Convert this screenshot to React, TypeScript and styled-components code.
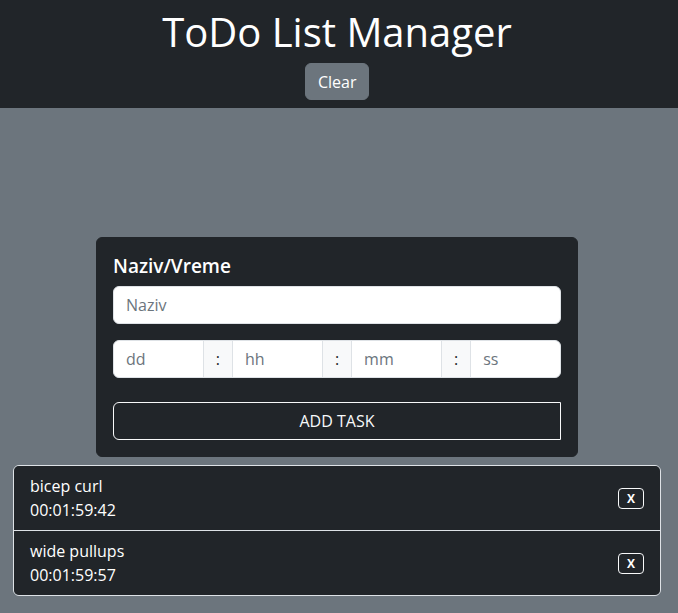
import React from 'react'
import styled, { createGlobalStyle } from 'styled-components'

const GlobalStyle = createGlobalStyle`
  * { box-sizing: border-box; }
  html, body {
    margin: 0;
    padding: 0;
    background: #6c757d;
    font-family: "Open Sans", "Noto Sans", sans-serif;
    color: #fff;
  }
`

const tasks = [
  { name: 'bicep curl', time: '00:01:59:42' },
  { name: 'wide pullups', time: '00:01:59:57' },
]

const Header = styled.header`
  background: #212529;
  padding: 6px 4px 8px 0;
  height: 108px;
  display: flex;
  flex-direction: column;
  align-items: center;
`

const Title = styled.h1`
  margin: 0 0 5px;
  font-size: 40px;
  font-weight: 500;
  line-height: 52px;
`

const ClearBtn = styled.button`
  background: #6c757d;
  color: #fff;
  border: 1px solid #6c757d;
  border-radius: 6px;
  font: inherit;
  font-size: 16px;
  line-height: 24px;
  padding: 6px 12px;
  width: 64px;
  height: 37px;
`

const Main = styled.main`
  padding: 129px 17px 0 13px;
  display: flex;
  flex-direction: column;
  align-items: center;
  gap: 8px;
`

const Card = styled.section`
  width: 482px;
  background: #212529;
  border: 1px solid #212529;
  border-radius: 6px;
  padding: 16px;
  display: flex;
  flex-direction: column;
`

const CardTitle = styled.h5`
  margin: 0 0 8px;
  font-size: 19px;
  font-weight: 600;
  line-height: 24px;
`

const Input = styled.input`
  display: block;
  width: 100%;
  min-width: 0;
  font: inherit;
  font-size: 16px;
  line-height: 24px;
  padding: 6px 12px;
  color: #212529;
  background: #fff;
  border: 1px solid #dee2e6;
  border-radius: 6px;
  &::placeholder { color: #6c757d; }
`

const TimeGroup = styled.div`
  display: flex;
  margin-top: 16px;
  ${Input} {
    flex: 1;
    border-radius: 0;
  }
  ${Input}:first-child { border-radius: 6px 0 0 6px; }
  ${Input}:last-child { border-radius: 0 6px 6px 0; }
`

const Addon = styled.span`
  display: flex;
  align-items: center;
  padding: 6px 12px;
  font-size: 16px;
  line-height: 24px;
  color: #212529;
  background: #f8f9fa;
  border: 1px solid #dee2e6;
  margin: 0 -1px;
  position: relative;
`

const AddBtn = styled.button`
  margin-top: 24px;
  width: 100%;
  background: transparent;
  color: #f8f9fa;
  border: 1px solid #f8f9fa;
  border-radius: 6px 0 0 6px;
  font: inherit;
  font-size: 16px;
  line-height: 24px;
  padding: 6px 12px;
`

const List = styled.ul`
  list-style: none;
  margin: 0;
  padding: 0;
  width: 648px;
  border: 1px solid #dee2e6;
  border-radius: 6px;
  overflow: hidden;
`

const Item = styled.li`
  background: #212529;
  padding: 8px 16px;
  display: flex;
  align-items: center;
  justify-content: space-between;
  font-size: 16px;
  line-height: 24px;
  & + & { border-top: 1px solid #dee2e6; }
`

const RemoveBtn = styled.button`
  background: transparent;
  color: #fff;
  border: 1px solid #f8f9fa;
  border-radius: 4px;
  font: inherit;
  font-size: 12px;
  font-weight: 700;
  line-height: 19px;
  padding: 0 8px;
  width: 26px;
  height: 21px;
`

export default function App() {
  return (
    <>
      <GlobalStyle />
      <Header>
        <Title>ToDo List Manager</Title>
        <ClearBtn>Clear</ClearBtn>
      </Header>
      <Main>
        <Card>
          <CardTitle>Naziv/Vreme</CardTitle>
          <Input placeholder="Naziv" />
          <TimeGroup>
            <Input placeholder="dd" />
            <Addon>:</Addon>
            <Input placeholder="hh" />
            <Addon>:</Addon>
            <Input placeholder="mm" />
            <Addon>:</Addon>
            <Input placeholder="ss" />
          </TimeGroup>
          <AddBtn>ADD TASK</AddBtn>
        </Card>
        <List>
          {tasks.map((t, i) => (
            <Item key={i}>
              <div>
                <div>{t.name}</div>
                <div>{t.time}</div>
              </div>
              <RemoveBtn>X</RemoveBtn>
            </Item>
          ))}
        </List>
      </Main>
    </>
  )
}
